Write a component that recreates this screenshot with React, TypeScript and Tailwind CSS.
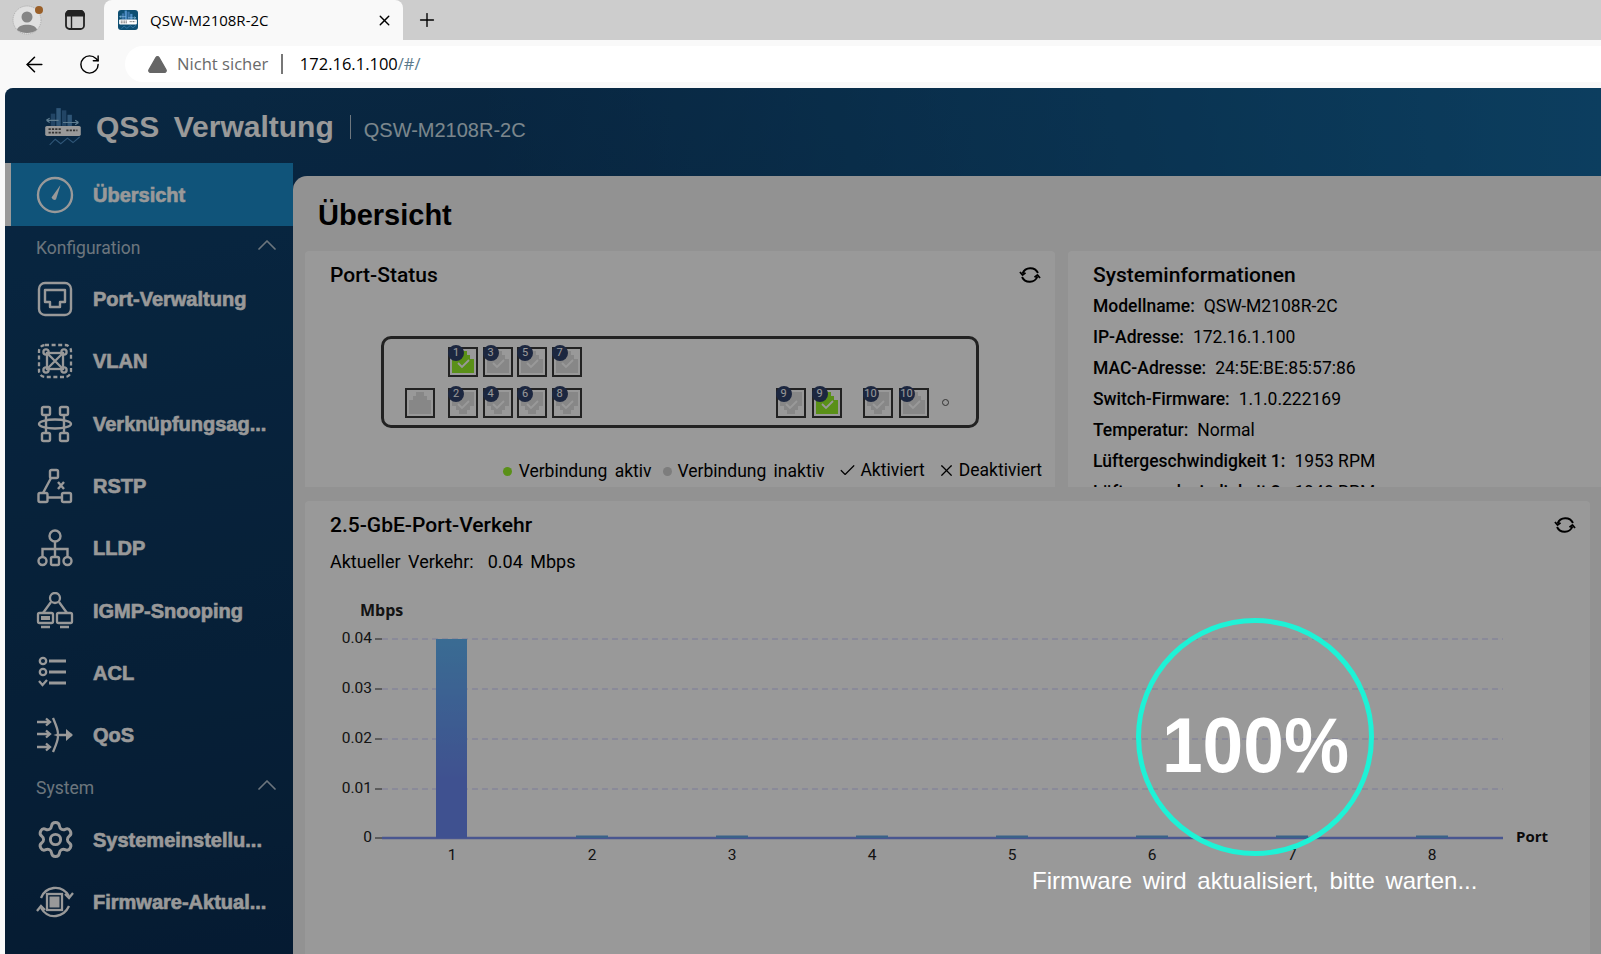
import { ChevronUp, Plus, X, ArrowLeft, RotateCw, TriangleAlert, Settings, Check } from "lucide-react";

const roboto = "font-['Roboto','Liberation_Sans',sans-serif]";

function GaugeIcon() {
  return (
    <svg width="38" height="38" viewBox="0 0 38 38" fill="none" stroke="white" strokeWidth="2.4">
      <circle cx="19" cy="19" r="17" />
      <path d="M15.5 21.5 L24.5 9 L20 23.5 Q17 25 15.5 21.5 Z" fill="white" stroke="none" />
    </svg>
  );
}

function PortIcon() {
  return (
    <svg width="36" height="36" viewBox="0 0 36 36" fill="none" stroke="white" strokeWidth="2.4" strokeLinejoin="round">
      <rect x="2" y="2" width="32" height="32" rx="6" />
      <path d="M8 9 H28 V21 H23 V26 H13 V21 H8 Z" />
    </svg>
  );
}

function VlanIcon() {
  return (
    <svg width="36" height="36" viewBox="0 0 36 36" fill="none" stroke="white" strokeWidth="2.3">
      <rect x="2" y="2" width="32" height="32" rx="6" strokeDasharray="4 2.6" />
      <rect x="10" y="10" width="16" height="16" />
      <path d="M10 10 L26 26 M26 10 L10 26" />
      <circle cx="9" cy="9" r="2.6" />
      <circle cx="27" cy="9" r="2.6" />
      <circle cx="9" cy="27" r="2.6" />
      <circle cx="27" cy="27" r="2.6" />
    </svg>
  );
}

function LagIcon() {
  return (
    <svg width="36" height="38" viewBox="0 0 36 38" fill="none" stroke="white" strokeWidth="2.4">
      <rect x="5" y="2" width="8" height="8" rx="1.5" />
      <rect x="23" y="2" width="8" height="8" rx="1.5" />
      <rect x="5" y="28" width="8" height="8" rx="1.5" />
      <rect x="23" y="28" width="8" height="8" rx="1.5" />
      <path d="M9 10 V28 M27 10 V28" />
      <ellipse cx="18" cy="19" rx="16" ry="4.5" />
    </svg>
  );
}

function RstpIcon() {
  return (
    <svg width="36" height="36" viewBox="0 0 36 36" fill="none" stroke="white" strokeWidth="2.4">
      <rect x="13" y="2" width="8" height="8" rx="1.5" />
      <rect x="1.5" y="25" width="9" height="9" rx="1.5" />
      <rect x="25" y="25" width="9" height="9" rx="1.5" />
      <path d="M14 10 L6 25 M10.5 29.5 H25 M21 14 L27 21 M27 14 L21 21" />
    </svg>
  );
}

function LldpIcon() {
  return (
    <svg width="36" height="38" viewBox="0 0 36 38" fill="none" stroke="white" strokeWidth="2.4">
      <circle cx="18" cy="7" r="5.5" />
      <path d="M18 12.5 V28 M5.5 28 V20 H30.5 V28" />
      <circle cx="5.5" cy="32" r="4" />
      <rect x="14" y="28" width="8" height="8" rx="1.5" />
      <circle cx="30.5" cy="32" r="4" />
    </svg>
  );
}

function IgmpIcon() {
  return (
    <svg width="38" height="38" viewBox="0 0 38 38" fill="none" stroke="white" strokeWidth="2.3">
      <circle cx="19" cy="6" r="5" />
      <path d="M15 10 L7 21 M23 10 L31 21" />
      <rect x="2" y="21" width="15" height="10" rx="1.5" />
      <rect x="21" y="21" width="15" height="10" rx="1.5" />
      <rect x="5" y="24" width="9" height="4" fill="white" stroke="none" />
      <path d="M5 35 H14 M24 35 H33" />
    </svg>
  );
}

function AclIcon() {
  return (
    <svg width="36" height="34" viewBox="0 0 36 34" fill="none" stroke="white" strokeWidth="2.3">
      <circle cx="6" cy="5" r="3.2" />
      <circle cx="6" cy="16" r="3.2" />
      <path d="M2 25 L5.5 29 L10 24" />
      <path d="M12 5 H29 M12 16 H29 M12 27 H29" strokeWidth="3" />
    </svg>
  );
}

function QosIcon() {
  return (
    <svg width="38" height="36" viewBox="0 0 38 36" fill="none" stroke="white" strokeWidth="2.3">
      <path d="M1 5 H14 M10 1.5 L14 5 L10 8.5 M1 17 H14 M10 13.5 L14 17 L10 20.5 M1 30 H14 M10 26.5 L14 30 L10 33.5" />
      <path d="M17 1 Q24 17 21 18 Q24 19 17 35 M22 18 H36" />
      <path d="M30 12 L37 18 L30 24 Z" fill="white" stroke="none" />
    </svg>
  );
}

function FirmwareIcon() {
  return (
    <svg width="38" height="36" viewBox="0 0 38 36" fill="none" stroke="white" strokeWidth="2.3">
      <path d="M5 14 C9 3 25 -1 33 12 M33 22 C28 33 13 37 5 24" />
      <path d="M29 10 L33 14 L37 9 M1 27 L5 22 L9 26" />
      <rect x="11" y="10" width="15" height="16" />
      <rect x="13.5" y="12.5" width="10" height="11" fill="white" stroke="none" />
    </svg>
  );
}

function RefreshIcon() {
  return (
    <svg width="24" height="24" viewBox="0 0 24 24" fill="none" stroke="black" strokeWidth="1.9" strokeLinejoin="round">
      <path d="M20 10 A8.5 8.5 0 0 0 4.5 10.5" />
      <path d="M4 14 A8.5 8.5 0 0 0 19.5 13.5" />
      <path d="M2 9 L4.5 12 L7.5 9.8" />
      <path d="M22 15 L19.5 12 L16.5 14.2" />
    </svg>
  );
}

function LogoIcon({ size }: { size: number }) {
  return (
    <svg width={size} height={size} viewBox="0 0 36 36" fill="none">
      <rect x="12" y="1" width="4" height="16" fill="#4f8fc7" />
      <rect x="17" y="3" width="4" height="14" fill="#3a73a8" />
      <rect x="7" y="6" width="4" height="11" fill="#3a73a8" />
      <rect x="22" y="7" width="4" height="10" fill="#4f8fc7" />
      <path d="M3 12 H14 M3 12 L6 10 M3 12 L6 14 M18 14 H32 M32 14 L29 12 M32 14 L29 16" stroke="#9fd0f0" strokeWidth="1" />
      <rect x="2" y="17" width="32" height="9" rx="1.5" fill="white" />
      <path d="M5 20 H17 M5 23 H17 M21 21 H31" stroke="#555" strokeWidth="1.6" strokeDasharray="2 1" />
      <path d="M6 34 L11 29 L16 33 L22 28 L27 32 L33 27" stroke="#4f8fc7" strokeWidth="1" />
    </svg>
  );
}

function PanelIcon() {
  return (
    <svg width="22" height="22" viewBox="0 0 22 22" fill="none" stroke="#222" strokeWidth="1.8">
      <rect x="2" y="2" width="18" height="18" rx="3.5" />
      <path d="M2 5.5 A3.5 3.5 0 0 1 5.5 2 H16.5 A3.5 3.5 0 0 1 20 5.5 V6.5 H2 Z" fill="#222" />
      <path d="M7.5 6.5 V20" strokeWidth="1.4" />
    </svg>
  );
}

function NavItem({ icon, label }: { icon: React.ReactNode; label: string }) {
  return (
    <div className="h-[62.3px] flex items-center pl-[27px]">
      <div className="w-[46px] h-[40px] flex items-center justify-center shrink-0">{icon}</div>
      <span className="ml-[15px] text-[20px] font-bold text-white font-['Liberation_Sans',sans-serif] [-webkit-text-stroke:0.6px_white] whitespace-nowrap">
        {label}
      </span>
    </div>
  );
}

function SectionLabel({ label }: { label: string }) {
  return (
    <div className="h-[42px] flex items-start justify-between pl-[31px] pr-[10px] pt-[8px]">
      <span className={`text-[17.5px] leading-[28px] text-[#b5c4d0] ${roboto}`}>{label}</span>
      <ChevronUp size={32} strokeWidth={1.3} className="text-[#b5c4d0] -mt-[5px]" />
    </div>
  );
}

function Sidebar() {
  return (
    <div className="w-[288px] shrink-0">
      <div className="h-[63px] flex items-center bg-[#1b8ccb] border-l-[6px] border-white pl-[24px]">
        <div className="w-[40px] flex justify-center"><GaugeIcon /></div>
        <span className="ml-[18px] text-[20px] font-bold text-white font-['Liberation_Sans',sans-serif] [-webkit-text-stroke:0.6px_white]">Übersicht</span>
      </div>
      <SectionLabel label="Konfiguration" />
      <NavItem icon={<PortIcon />} label="Port-Verwaltung" />
      <NavItem icon={<VlanIcon />} label="VLAN" />
      <NavItem icon={<LagIcon />} label="Verknüpfungsag..." />
      <NavItem icon={<RstpIcon />} label="RSTP" />
      <NavItem icon={<LldpIcon />} label="LLDP" />
      <NavItem icon={<IgmpIcon />} label="IGMP-Snooping" />
      <NavItem icon={<AclIcon />} label="ACL" />
      <NavItem icon={<QosIcon />} label="QoS" />
      <SectionLabel label="System" />
      <NavItem icon={<Settings size={41} strokeWidth={1.7} color="white" />} label="Systemeinstellu..." />
      <NavItem icon={<FirmwareIcon />} label="Firmware-Aktual..." />
    </div>
  );
}

function PortBox({ n, up, green, plain }: { n?: number; up?: boolean; green?: boolean; plain?: boolean }) {
  const fill = green ? "#96f028" : "#e2e2e2";
  const shape = up
    ? "M4 26 V12 H8 V8 H11 V4 H19 V8 H22 V12 H26 V26 Z"
    : "M4 4 V18 H8 V22 H11 V26 H19 V22 H22 V18 H26 V4 Z";
  return (
    <div className="relative w-[30px] h-[30px] border-2 border-[#3a3a3a] shrink-0">
      <svg width="26" height="26" viewBox="2 2 26 26" className="block">
        <path d={shape} fill={fill} />
        {!plain && <path d="M10 16 L14 20 L21 13" stroke="white" strokeWidth="1.8" fill="none" />}
      </svg>
      {n !== undefined && (
        <span className={`absolute -left-[2px] -top-[4px] w-[16px] h-[16px] rounded-full bg-[#30416b] text-white text-[11px] leading-[16px] text-center ${roboto}`}>
          {n}
        </span>
      )}
    </div>
  );
}

function SwitchPanel() {
  return (
    <div className="ml-[76px] mt-[48px] w-[598px] h-[92px] border-[3px] border-[#3a3a3a] rounded-[10px] flex items-end pb-[7px] pl-[21px]">
      <PortBox up plain />
      <div className="ml-[13px] flex flex-col gap-[11px]">
        <div className="flex gap-[4.5px]">
          <PortBox n={1} up green />
          <PortBox n={3} up />
          <PortBox n={5} up />
          <PortBox n={7} up />
        </div>
        <div className="flex gap-[4.5px]">
          <PortBox n={2} />
          <PortBox n={4} />
          <PortBox n={6} />
          <PortBox n={8} />
        </div>
      </div>
      <div className="ml-[194px] flex">
        <PortBox n={9} />
        <div className="ml-[6px]"><PortBox n={9} up green /></div>
        <div className="ml-[21px]"><PortBox n={10} /></div>
        <div className="ml-[6px]"><PortBox n={10} up /></div>
      </div>
      <div className="ml-[13px] mb-[12px] w-[7px] h-[7px] rounded-full border border-[#555]" />
    </div>
  );
}

function Legend() {
  return (
    <div className={`flex items-center justify-end pr-[13px] mt-[29px] text-[17.5px] leading-[24px] text-black [word-spacing:3px] ${roboto}`}>
      <span className="w-[9px] h-[9px] rounded-full bg-[#96f028] mr-[7px] mt-[2px]" />
      <span className="mt-[2px]">Verbindung aktiv</span>
      <span className="w-[9px] h-[9px] rounded-full bg-[#d0d0d0] ml-[11px] mr-[6px] mt-[2px]" />
      <span className="mt-[2px]">Verbindung inaktiv</span>
      <Check size={19} strokeWidth={1.5} className="ml-[14px] mr-[1px]" />
      <span className="ml-[2px]">Aktiviert</span>
      <X size={19} strokeWidth={1.5} className="ml-[12px] mr-[1px]" />
      <span className="ml-[2px]">Deaktiviert</span>
    </div>
  );
}

const sysInfo = [
  ["Modellname:", "QSW-M2108R-2C"],
  ["IP-Adresse:", "172.16.1.100"],
  ["MAC-Adresse:", "24:5E:BE:85:57:86"],
  ["Switch-Firmware:", "1.1.0.222169"],
  ["Temperatur:", "Normal"],
  ["Lüftergeschwindigkeit 1:", "1953 RPM"],
  ["Lüftergeschwindigkeit 2:", "1948 RPM"],
];

function TrafficChart() {
  const gridY = [639, 689, 739, 789];
  const tickLabels = ["0.04", "0.03", "0.02", "0.01"];
  const cols = [452, 592, 732, 872, 1012, 1152, 1292, 1432];
  const ox = 305;
  const oy = 590;
  return (
    <svg width="1285" height="290" viewBox={`${ox} ${oy} 1285 290`} className="block">
      <defs>
        <linearGradient id="barFill" x1="0" y1="0" x2="0" y2="1">
          <stop offset="0" stopColor="#61b4f5" />
          <stop offset="0.7" stopColor="#6a88f0" />
        </linearGradient>
      </defs>
      <text x="360" y="616" fontFamily="'Open Sans','Liberation Sans',sans-serif" fontSize="16" fontWeight="700" fill="#222">Mbps</text>
      {gridY.map((y, i) => (
        <g key={y}>
          <line x1="382" x2="1503" y1={y} y2={y} stroke="#e0e0ff" strokeWidth="1.3" strokeDasharray="6 4" />
          <line x1="375" x2="382" y1={y} y2={y} stroke="#333" />
          <text x="372" y={y + 4} textAnchor="end" fontFamily="Roboto,sans-serif" fontSize="15.5" fill="#222">{tickLabels[i]}</text>
        </g>
      ))}
      <line x1="375" x2="382" y1="838" y2="838" stroke="#333" />
      <text x="372" y="842" textAnchor="end" fontFamily="Roboto,sans-serif" fontSize="15.5" fill="#222">0</text>
      <line x1="382" x2="1503" y1="838" y2="838" stroke="#7b8ff0" strokeWidth="2.6" />
      <rect x="436" y="639" width="31" height="199" fill="url(#barFill)" />
      {cols.slice(1).map((x) => (
        <rect key={x} x={x - 16} y="835.5" width="32" height="2.5" fill="#61a4e5" />
      ))}
      {cols.map((x, i) => (
        <text key={x} x={x} y="860" textAnchor="middle" fontFamily="Roboto,sans-serif" fontSize="15.5" fill="#222">{i + 1}</text>
      ))}
      <text x="1516" y="842" fontFamily="'Open Sans','Liberation Sans',sans-serif" fontSize="15" fontWeight="700" fill="#111">Port</text>
    </svg>
  );
}

function TabStrip() {
  return (
    <div className="h-[40px] bg-[#cdcdcd] flex items-end shrink-0">
      <div className="w-[104px] h-[40px] flex items-center pl-[12px] gap-[20px]">
        <div className="relative w-[32px] h-[32px]">
          <svg width="32" height="32" viewBox="0 0 32 32">
            <circle cx="15" cy="16" r="14" fill="#e0e0e0" stroke="#aaa" strokeDasharray="1 1" />
            <circle cx="15" cy="13" r="5.5" fill="#858585" />
            <path d="M5 26 C6 19 24 19 25 26 C20 30 10 30 5 26 Z" fill="#858585" />
          </svg>
          <span className="absolute right-[1px] top-[2px] w-[8px] h-[8px] rounded-full bg-[#9a5f28]" />
        </div>
        <PanelIcon />
      </div>
      <div className="w-[299px] h-[40px] bg-[#f9f9f9] rounded-t-[8px] flex items-center pl-[14px] pr-[10px]">
        <div className="rounded-[3px] bg-[#0e4f72] shrink-0"><LogoIcon size={20} /></div>
        <span className="ml-[12px] text-[15px] text-black font-['Open_Sans',sans-serif]">QSW-M2108R-2C</span>
        <X size={17} strokeWidth={2} className="ml-auto text-black" />
      </div>
      <div className="h-[40px] flex items-center pl-[13px]">
        <Plus size={22} strokeWidth={1.5} className="text-black" />
      </div>
    </div>
  );
}

function Toolbar() {
  return (
    <div className="h-[48px] bg-[#f9f9f9] flex items-center shrink-0 pl-[22px]">
      <ArrowLeft size={25} strokeWidth={1.5} className="text-black" />
      <RotateCw size={23} strokeWidth={1.5} className="ml-[31px] text-black" />
      <div className="ml-[24px] flex-1 h-[36px] bg-white rounded-l-full flex items-center pl-[22px] font-['Open_Sans',sans-serif]">
        <TriangleAlert size={21} fill="#666" stroke="#666" strokeWidth={1.5} />
        <span className="ml-[9px] text-[#6a6a6a] text-[16.6px]">Nicht sicher</span>
        <span className="ml-[13px] w-[1.5px] h-[20px] bg-[#777]" />
        <span className="ml-[17px] text-[16.5px] text-black">172.16.1.100</span>
        <span className="text-[16.5px] text-[#5b7a8c]">/#/</span>
      </div>
    </div>
  );
}

export default function App() {
  return (
    <div className="w-[1601px] h-[954px] flex flex-col bg-[#f9f9f9] overflow-hidden">
      <TabStrip />
      <Toolbar />
      <div className="relative flex-1 ml-[5px] rounded-tl-[8px] overflow-hidden flex flex-col bg-[linear-gradient(90deg,transparent_30%,#14689f_100%),linear-gradient(170deg,#0f426f_0%,#0a3157_70%,#07254d_100%)]">
        {/* Header */}
        <div className="h-[75px] shrink-0 flex items-center pl-[38px] pt-[2px]">
          <LogoIcon size={40} />
          <span className="ml-[13px] text-[30px] font-bold text-white font-['Liberation_Sans',sans-serif] [word-spacing:6px]">QSS Verwaltung</span>
          <span className="ml-[16px] w-[1px] h-[24px] bg-white/70" />
          <span className="ml-[13px] mt-[6px] text-[20px] text-[#cfe0ea] font-['Liberation_Sans',sans-serif]">QSW-M2108R-2C</span>
        </div>
        <div className="flex flex-1 min-h-0">
          <Sidebar />
          {/* Main */}
          <div className="flex-1 mt-[13px] bg-[#f3f3f3] rounded-tl-[14px] pl-[12px] pr-[11px] overflow-hidden">
            <h1 className="h-[75px] pl-[13px] pt-[22px] text-[29px] leading-[34px] font-bold text-black font-['Liberation_Sans',sans-serif]">Übersicht</h1>
            <div className="flex gap-[13px] -mr-[11px]">
              <div className="w-[750px] h-[236px] bg-white rounded-t-[4px] overflow-hidden shrink-0">
                <div className="flex items-center justify-between pl-[25px] pr-[13px] pt-[11px]">
                  <span className={`text-[21px] leading-[26px] font-medium text-black ${roboto}`}>Port-Status</span>
                  <RefreshIcon />
                </div>
                <SwitchPanel />
                <Legend />
              </div>
              <div className={`flex-1 h-[236px] bg-white rounded-tl-[4px] pl-[25px] pt-[11px] overflow-hidden ${roboto}`}>
                <div className="text-[21px] leading-[26px] font-medium text-black">Systeminformationen</div>
                <div className="mt-[3px] text-[17.5px] leading-[31px] text-black">
                  {sysInfo.map(([k, v]) => (
                    <div key={k} className="whitespace-nowrap">
                      <span className="font-medium">{k}</span>
                      <span className="ml-[9px]">{v}</span>
                    </div>
                  ))}
                </div>
              </div>
            </div>
            <div className="mt-[14px] h-[500px] bg-white rounded-t-[4px]">
              <div className="flex items-center justify-between pl-[25px] pr-[13px] pt-[11px]">
                <span className={`text-[21px] leading-[26px] font-medium text-black ${roboto}`}>2.5-GbE-Port-Verkehr</span>
                <RefreshIcon />
              </div>
              <div className={`pl-[25px] mt-[12px] text-[18px] leading-[24px] text-black [word-spacing:3px] ${roboto}`}>Aktueller Verkehr:<span className="ml-[14px]">0.04 Mbps</span></div>
              <div className="mt-[16px]"><TrafficChart /></div>
            </div>
          </div>
        </div>

        {/* Dim layer with upgrade progress */}
        <div className="absolute inset-0 bg-black/40" />
        <div className="absolute left-[1131px] top-[530px] w-[238px] h-[238px] rounded-full border-[5px] border-[#1ef2d6] flex items-center justify-center">
          <span className="inline-block scale-x-[0.95] text-[77px] font-bold text-white leading-none font-['Liberation_Sans',sans-serif] mt-[16px]">100%</span>
        </div>
        <div className="absolute left-[1027px] top-[778px] text-[24px] leading-[30px] text-white whitespace-nowrap font-['Liberation_Sans',sans-serif] [word-spacing:4px]">
          Firmware wird aktualisiert, bitte warten...
        </div>
      </div>
    </div>
  );
}
